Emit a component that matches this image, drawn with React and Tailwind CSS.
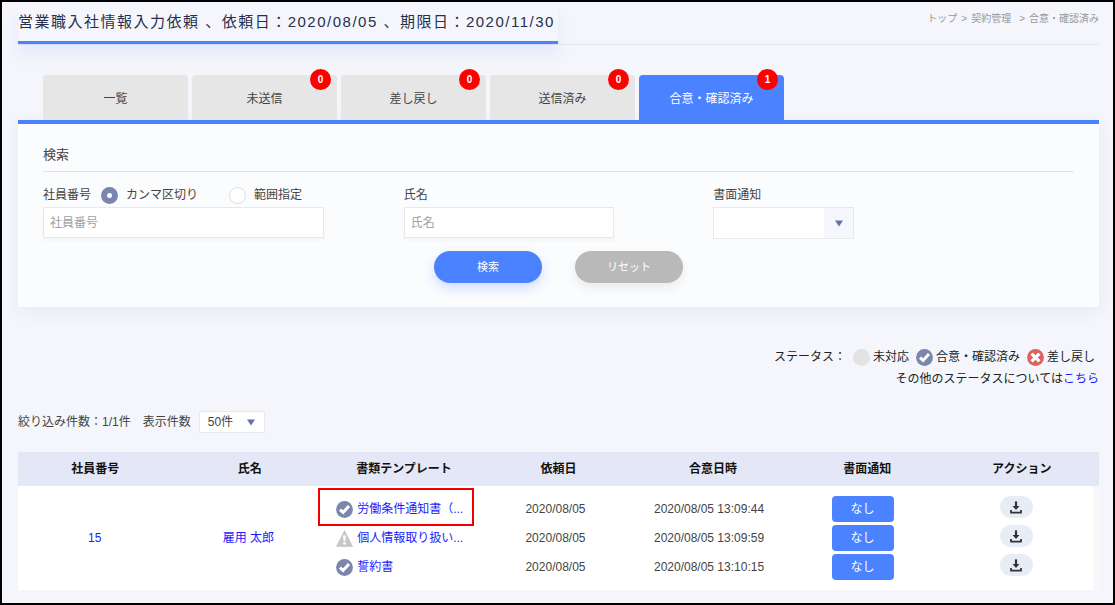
const tabs = [
    { label: "一覧" },
    { label: "未送信", count: 0 },
    { label: "差し戻し", count: 0 },
    { label: "送信済み", count: 0 },
    { label: "合意・確認済み", count: 1, active: true },
];

const columns = ["社員番号", "氏名", "書類テンプレート", "依頼日", "合意日時", "書面通知", "アクション"];

const documents = [
    { name: "労働条件通知書（...", status: "done", requested: "2020/08/05", agreed: "2020/08/05 13:09:44", highlight: true },
    { name: "個人情報取り扱い...", status: "warning", requested: "2020/08/05", agreed: "2020/08/05 13:09:59" },
    { name: "誓約書", status: "done", requested: "2020/08/05", agreed: "2020/08/05 13:10:15" },
];

function CheckIcon() {
    return (
        <svg viewBox="0 0 17 17" className="size-[17px] shrink-0" aria-hidden="true">
            <circle cx="8.5" cy="8.5" r="8.4" fill="#7b86ad" />
            <path d="M4 8.6 7.1 11.4 13 5" fill="none" stroke="#fff" strokeWidth="3" />
        </svg>
    );
}

function CrossIcon() {
    return (
        <svg viewBox="0 0 17 17" className="size-[17px] shrink-0" aria-hidden="true">
            <circle cx="8.5" cy="8.5" r="8.4" fill="#e0605e" />
            <path d="M4.6 4.6 12.4 12.4M12.4 4.6 4.6 12.4" fill="none" stroke="#fff" strokeWidth="3.2" />
        </svg>
    );
}

function WarningIcon() {
    return (
        <svg viewBox="0 0 17 17" className="size-[17px] shrink-0" aria-hidden="true">
            <path d="M8.5 0.6 16.5 16.4H0.5Z" fill="#c6c8c8" stroke="#c6c8c8" strokeWidth="0.8" strokeLinejoin="round" />
            <path d="M7.1 5.6H9.9L9.4 11.2H7.6Z" fill="#fff" />
            <circle cx="8.5" cy="13.4" r="1.3" fill="#fff" />
        </svg>
    );
}

function DownloadIcon() {
    return (
        <svg viewBox="0 0 12 13" className="h-[13px] w-3" aria-hidden="true">
            <path d="M4.9 0.6Q6 -0.2 7.1 0.6V5H9.5L6 9 2.5 5H4.9Z" fill="#333" />
            <path d="M1 8.9V11.7H11V8.9" fill="none" stroke="#333" strokeWidth="1.8" strokeLinejoin="round" />
        </svg>
    );
}

function Arrow() {
    return (
        <svg viewBox="0 0 8 7" className="h-[7px] w-2" aria-hidden="true">
            <path d="M0 0.5H8L4 6.5Z" fill="#6672a8" />
        </svg>
    );
}

function Header() {
    return (
        <header className="flex items-start justify-between border-b border-[#e3e6f1]">
            <h1 className="border-b-3 border-[#4a82ff] pr-[3px] text-[15px] leading-[39px] tracking-widest text-[#26304d] shadow-[0_10px_16px_rgba(74,130,255,0.1)]">
                営業職入社情報入力依頼 、依頼日：2020/08/05 、期限日：2020/11/30
            </h1>
            <nav className="flex gap-1 text-[10px] leading-[34px] text-[#999]">
                <a href="#top">トップ</a>
                <span>&gt;</span>
                <a href="#contract">契約管理</a>
                <span className="pl-1">&gt;</span>
                <span>合意・確認済み</span>
            </nav>
        </header>
    );
}

function Tabs() {
    return (
        <div className="mt-[30px] flex gap-1 px-[25px]">
            {tabs.map((tab) => (
                <button
                    key={tab.label}
                    type="button"
                    className={
                        "relative h-[45px] w-[145px] rounded-t pt-0.5 " +
                        (tab.active ? "bg-[#4a82ff] text-white" : "bg-[#e6e6e6] text-[#444]")
                    }
                >
                    {tab.label}
                    {tab.count !== undefined && (
                        <span className="absolute -top-1.5 right-1.5 size-[21px] rounded-full bg-[#ff0000] text-[10px] leading-[21px] font-bold text-white">
                            {tab.count}
                        </span>
                    )}
                </button>
            ))}
        </div>
    );
}

function SearchPanel() {
    return (
        <form className="border-t-4 border-[#4a82ff] bg-[#fbfcfe] px-[25px] pt-[21px] pb-6 shadow-[0_4px_16px_rgba(60,70,130,0.07)]">
            <h2 className="border-b border-[#e2e3e7] pb-1.5 text-[13px] leading-5">検索</h2>

            <div className="mt-[11px] grid grid-cols-[35%_30%_35%]">
                <div>
                    <div className="flex h-6 items-center">
                        <label htmlFor="employeeNo" className="mr-2.5">社員番号</label>
                        <label className="flex w-32 items-center gap-2">
                            <input
                                type="radio"
                                name="mode"
                                defaultChecked
                                className="size-[17px] appearance-none rounded-full border border-[#ddd] bg-white checked:border-6 checked:border-[#7b86b0]"
                            />
                            カンマ区切り
                        </label>
                        <label className="flex items-center gap-2">
                            <input
                                type="radio"
                                name="mode"
                                className="size-[17px] appearance-none rounded-full border border-[#ddd] bg-white checked:border-6 checked:border-[#7b86b0]"
                            />
                            範囲指定
                        </label>
                    </div>
                    <input
                        id="employeeNo"
                        type="text"
                        placeholder="社員番号"
                        className="block h-[31px] w-[281px] border border-[#e9e9eb] bg-white px-1.5 shadow-[0_3px_4px_rgba(0,0,0,0.03)] placeholder:text-[#a0a0a0]"
                    />
                </div>

                <div>
                    <label htmlFor="name" className="flex h-6 items-center">氏名</label>
                    <input
                        id="name"
                        type="text"
                        placeholder="氏名"
                        className="block h-[31px] w-[210px] border border-[#e9e9eb] bg-white px-1.5 shadow-[0_3px_4px_rgba(0,0,0,0.03)] placeholder:text-[#a0a0a0]"
                    />
                </div>

                <div>
                    <label htmlFor="notice" className="flex h-6 items-center">書面通知</label>
                    <div className="relative w-[141px]">
                        <select id="notice" className="block h-8 w-full appearance-none border border-[#e9e9eb] bg-white px-2">
                            <option></option>
                            <option>あり</option>
                            <option>なし</option>
                        </select>
                        <span className="pointer-events-none absolute inset-y-px right-px flex w-[29px] items-center justify-center bg-[#f5f7fc]">
                            <Arrow />
                        </span>
                    </div>
                </div>
            </div>

            <div className="mt-3 flex justify-center gap-[33px] text-[11px] text-white">
                <button type="submit" className="h-8 w-[108px] rounded-full bg-[#4a82ff] shadow-[0_5px_12px_rgba(74,130,255,0.25)]">
                    検索
                </button>
                <button type="reset" className="h-8 w-[108px] rounded-full bg-[#b9b9b9] shadow-[0_5px_12px_rgba(0,0,0,0.07)]">
                    リセット
                </button>
            </div>
        </form>
    );
}

function Legend() {
    return (
        <div className="mt-[39px] text-right leading-[22px] text-[#222]">
            <div className="flex items-center justify-end gap-[3px] pr-1">
                <span className="mr-1">ステータス：</span>
                <span className="size-[17px] rounded-full bg-[#e3e3e3]"></span>
                <span className="mr-1">未対応</span>
                <CheckIcon />
                <span className="mr-1">合意・確認済み</span>
                <CrossIcon />
                <span>差し戻し</span>
            </div>
            <p>
                その他のステータスについては<a href="#status" className="text-[#1a1aff]">こちら</a>
            </p>
        </div>
    );
}

function ResultTable() {
    return (
        <table className="mt-[19px] block w-full text-center">
            <thead className="block bg-[#e4e8f6] text-[#111]">
                <tr className="table w-full table-fixed">
                    {columns.map((column) => (
                        <th key={column} className="h-[34px] p-0 font-bold">{column}</th>
                    ))}
                </tr>
            </thead>
            <tbody className="block border-r-6 border-[#f8f8f9] bg-white">
                <tr className="table w-full table-fixed">
                    <td><a href="#employee" className="text-[#1a1aff]">15</a></td>
                    <td><a href="#employee" className="text-[#1a1aff]">雇用 太郎</a></td>
                    <td className="py-2.5 pl-[11px]">
                        <ul className="flex flex-col gap-[3px]">
                            {documents.map((doc) => (
                                <li key={doc.name} className="relative flex h-[26px] items-center gap-1">
                                    {doc.status === "done" ? <CheckIcon /> : <WarningIcon />}
                                    <a href="#document" className="whitespace-nowrap text-[#1a1aff]">{doc.name}</a>
                                    {doc.highlight && (
                                        <span className="pointer-events-none absolute -top-2 -left-[18px] h-[38px] w-[156px] border-2 border-[#f40000]"></span>
                                    )}
                                </li>
                            ))}
                        </ul>
                    </td>
                    <td>
                        <ul className="flex flex-col gap-[3px] leading-[26px]">
                            {documents.map((doc) => <li key={doc.name}>{doc.requested}</li>)}
                        </ul>
                    </td>
                    <td>
                        <ul className="flex flex-col gap-[3px] leading-[26px]">
                            {documents.map((doc) => <li key={doc.name}>{doc.agreed}</li>)}
                        </ul>
                    </td>
                    <td>
                        <div className="flex flex-col items-center gap-[3px]">
                            {documents.map((doc) => (
                                <button key={doc.name} type="button" className="h-[26px] w-[62px] rounded bg-[#4a82ff] text-white">
                                    なし
                                </button>
                            ))}
                        </div>
                    </td>
                    <td>
                        <div className="flex flex-col items-center gap-[7px] pb-1">
                            {documents.map((doc) => (
                                <button
                                    key={doc.name}
                                    type="button"
                                    aria-label="ダウンロード"
                                    className="flex h-[22px] w-[33px] items-center justify-center rounded-full bg-[#e7ecf7]"
                                >
                                    <DownloadIcon />
                                </button>
                            ))}
                        </div>
                    </td>
                </tr>
            </tbody>
        </table>
    );
}

export default function App() {
    return (
        <div className="min-h-screen border-2 border-black bg-[#f5f6fb] pr-3.5 pl-4 font-['Liberation_Sans','Noto_Sans_CJK_JP',sans-serif] text-xs text-[#444]">
            <Header />
            <Tabs />
            <SearchPanel />
            <Legend />

            <div className="mt-[21px] flex h-[22px] items-center">
                <span>絞り込み件数：1/1件</span>
                <label htmlFor="perPage" className="ml-3">表示件数</label>
                <div className="relative ml-2 w-[66px]">
                    <select id="perPage" className="block h-[22px] w-full appearance-none border border-[#e9e9eb] bg-white px-2">
                        <option>50件</option>
                        <option>100件</option>
                    </select>
                    <span className="pointer-events-none absolute inset-y-0 right-2.5 flex items-center">
                        <Arrow />
                    </span>
                </div>
            </div>

            <ResultTable />
        </div>
    );
}
